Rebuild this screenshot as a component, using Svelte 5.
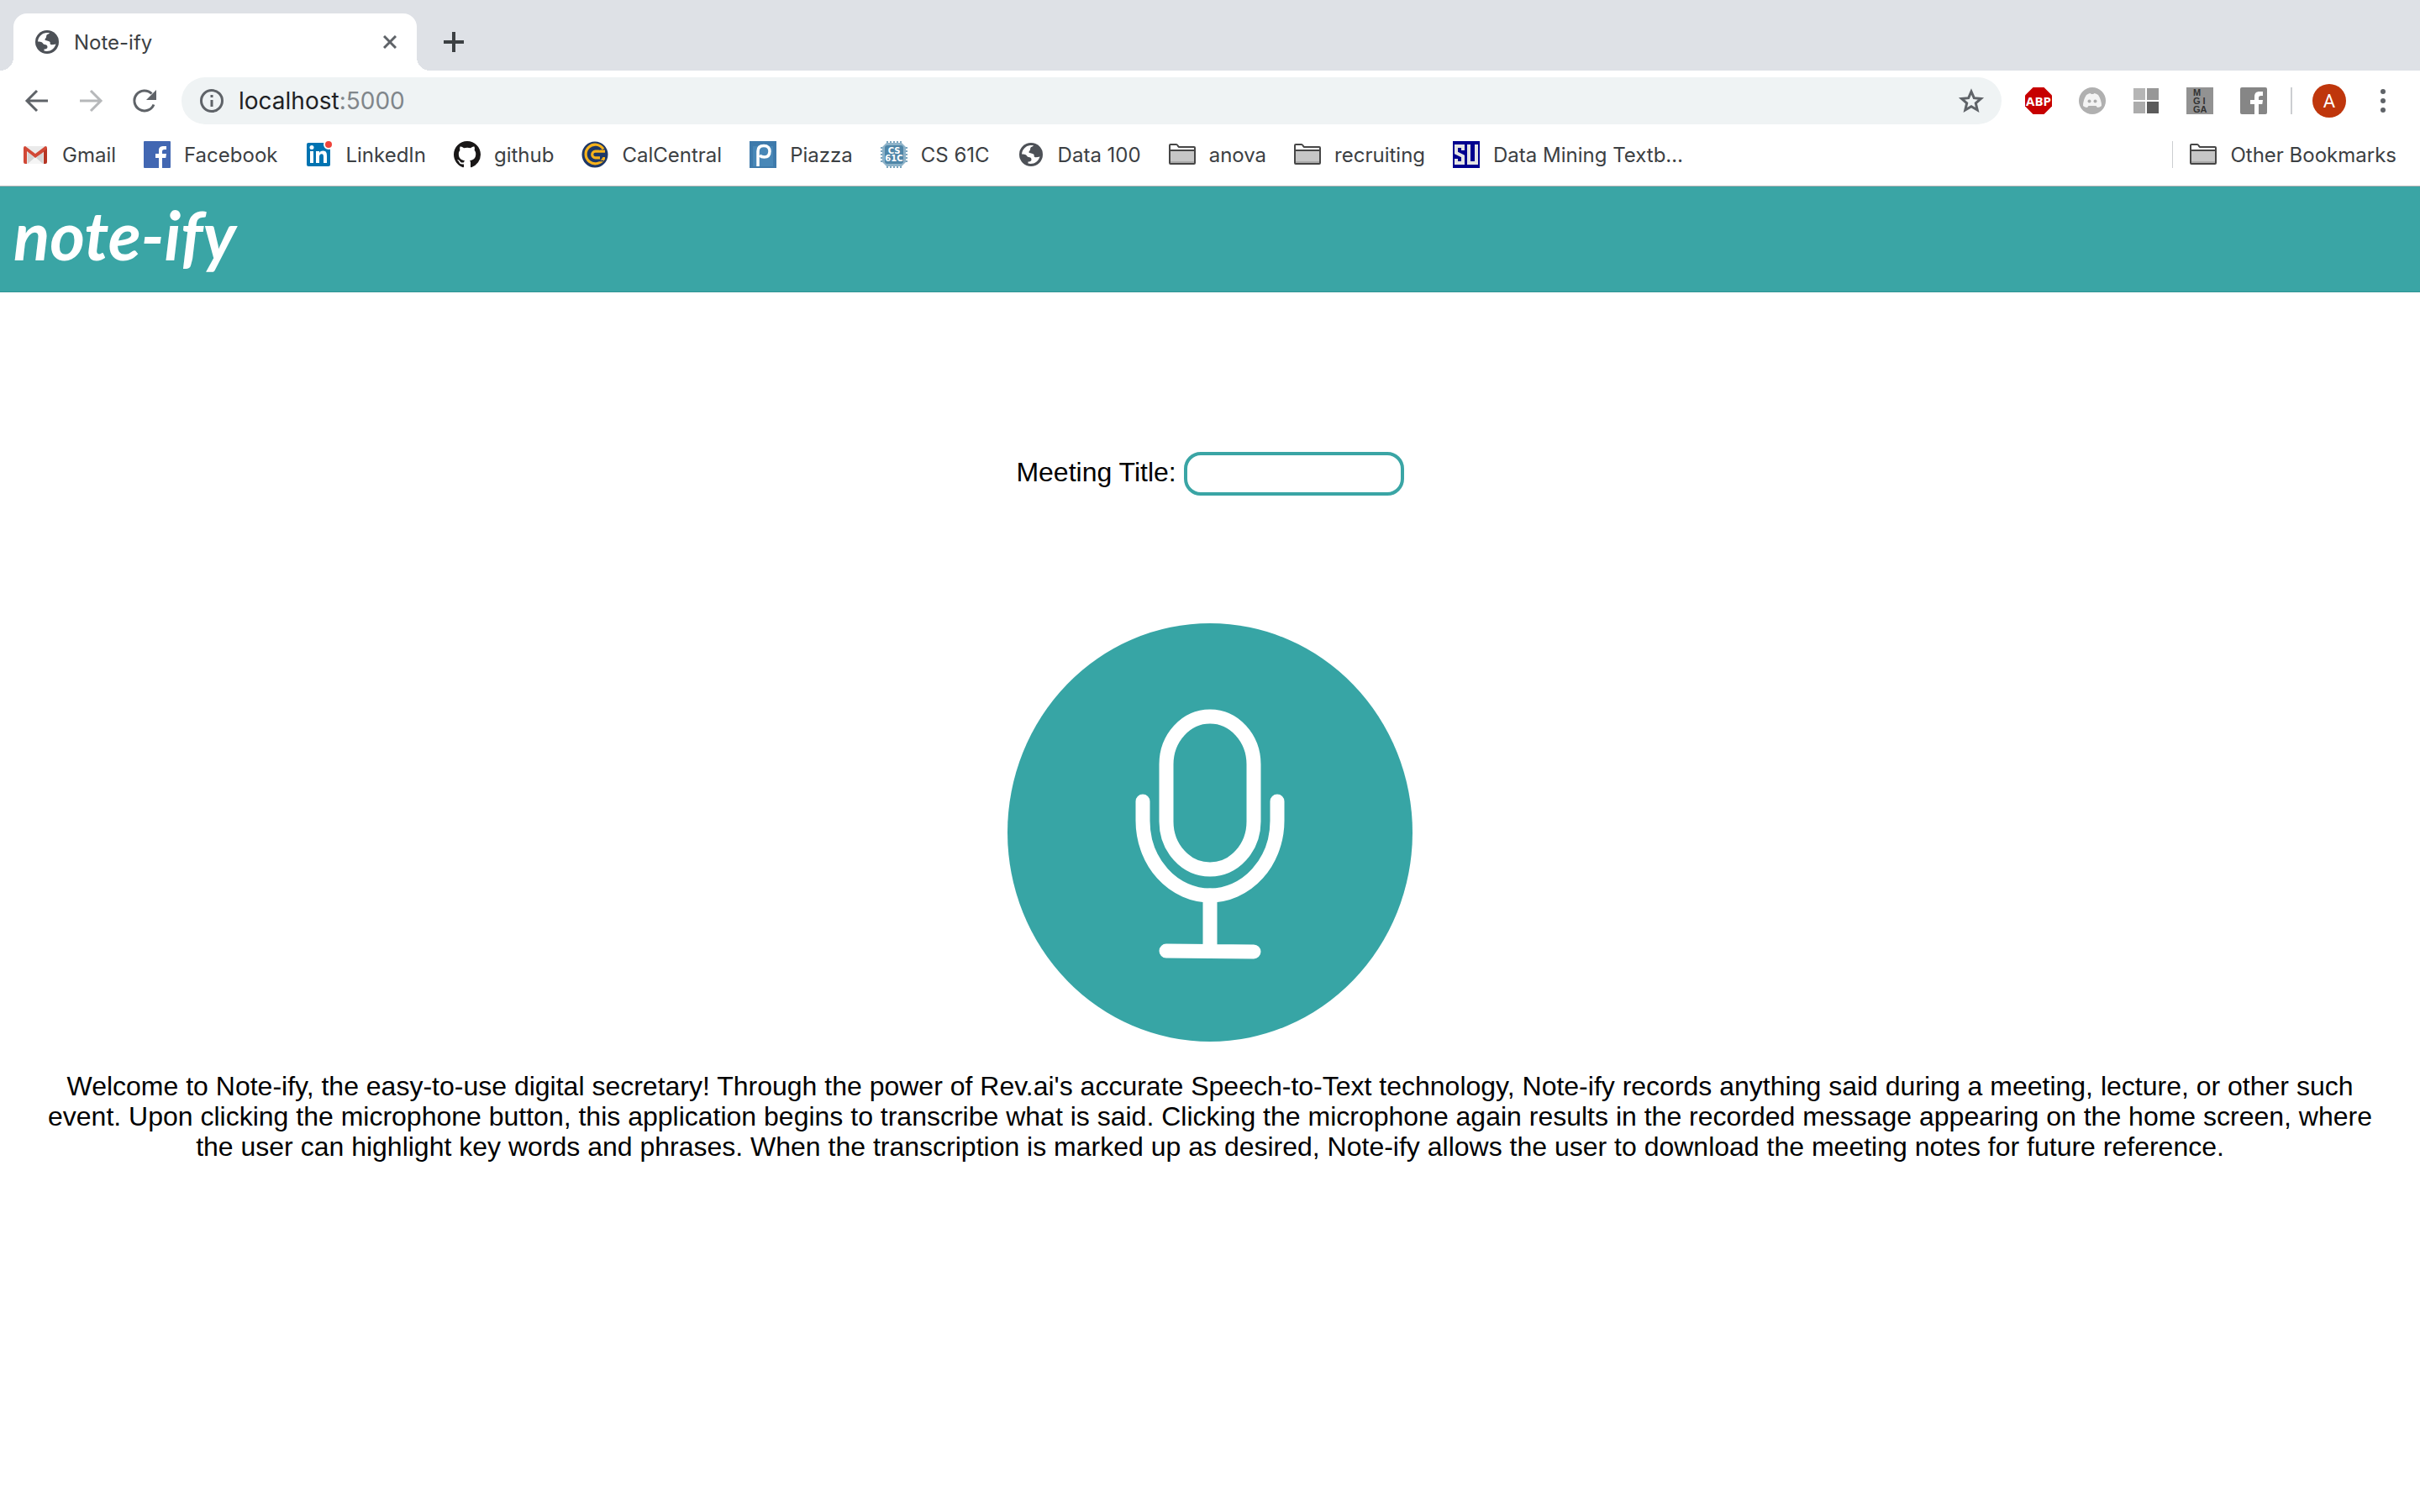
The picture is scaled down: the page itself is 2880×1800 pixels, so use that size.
<script lang="ts">
    type Bookmark = { label: string; icon: string };

    const bookmarks: Bookmark[] = [
        { label: 'Gmail', icon: 'gmail' },
        { label: 'Facebook', icon: 'facebook' },
        { label: 'LinkedIn', icon: 'linkedin' },
        { label: 'github', icon: 'github' },
        { label: 'CalCentral', icon: 'calcentral' },
        { label: 'Piazza', icon: 'piazza' },
        { label: 'CS 61C', icon: 'cs61c' },
        { label: 'Data 100', icon: 'globe' },
        { label: 'anova', icon: 'folder' },
        { label: 'recruiting', icon: 'folder' },
        { label: 'Data Mining Textb…', icon: 'su' }
    ];

    const extensions = ['abp', 'discord', 'squares', 'mgiga', 'facebook-gray'];

    let url = $state('localhost:5000');
    let meetingTitle = $state('');
    let recording = $state(false);

    // the port is drawn in a lighter gray than the host
    const host = $derived(url.split(':')[0]);
    const port = $derived(url.slice(host.length));

    function toggleRecording() {
        recording = !recording;
    }
</script>

<svelte:head>
    <title>Note-ify</title>
</svelte:head>

{#snippet icon(name: string)}
    <svg class="icon" viewBox="0 0 32 32" aria-hidden="true">
        {#if name === 'globe'}
            <circle cx="16" cy="16" r="14" fill="#4d5157" />
            <path fill="#fff" d="M5 15.500C5.500 10 9.500 5.600 15 5C17 4.800 18.500 5 19 5.300C18.500 6.500 16.500 6.500 15.500 7.800C14.800 9 15.500 10.300 14.500 11.300C13.500 12.300 13 13.500 14 14C15.500 14.500 18.500 14.500 19.500 16C20 17 19 18.500 20.500 19C22 19.500 24.500 18.800 26.500 18.500C25 23.500 20.500 27 15.500 27C14.500 27 13.500 26.800 12.500 26.500V24.500C14.500 24.500 16.500 24 16.500 22C16.500 20 15 19 13 19C11 18.500 11.500 17.500 10 16.500C9 15.800 7 15.500 5 15.500Z" />
        {:else if name === 'gmail'}
            <path fill="#eaeaea" d="M3 6h26v21H3z" />
            <path fill="#d4d4d4" d="M7 13l9 8 9-8v14l-9-6-9 6z" />
            <path fill="#f5f5f5" d="M7 27l9-8 9 8z" />
            <path fill="#d14836" d="M2 8q0-2 2-2l12 9 12-9q2 0 2 2v2l-14 10L6 12v15H4q-2 0-2-2z" />
            <path fill="#b63524" d="M26 12l4-3v16q0 2-2 2h-2z" />
        {:else if name === 'facebook'}
            <rect width="32" height="32" rx="1" fill="#4267b2" />
            <path fill="#fff" d="M18 32V20h-4v-5h4v-4c0-4 2.500-5 6-5h3v4h-2c-2.500 0-3 1-3 2.500V15h5l-.7 5H22v12z" />
        {:else if name === 'linkedin'}
            <rect x="2" y="2" width="28" height="28" rx="2" fill="#0073b1" />
            <path fill="#fff" d="M6 12h4v14H6zM13 12h4v2c1-1.600 2.500-2.400 4.500-2.400 4 0 4.500 3 4.500 6V26h-4v-7c0-2-.3-3.700-2.200-3.700S17 17 17 19v7h-4z" />
            <circle cx="8" cy="7.500" r="2.500" fill="#fff" />
            <circle cx="28" cy="4" r="6" fill="#fff" />
            <circle cx="28" cy="4" r="4" fill="#f0433a" />
        {:else if name === 'github'}
            <path transform="scale(2)" fill="#191717" d="M8 0C3.580 0 0 3.580 0 8c0 3.540 2.290 6.530 5.470 7.590.4.070.55-.17.55-.38 0-.19-.01-.82-.01-1.490-2.010.37-2.530-.49-2.690-.94-.09-.23-.48-.94-.82-1.130-.28-.15-.68-.52-.01-.53.63-.01 1.080.58 1.230.82.72 1.210 1.870.87 2.330.66.070-.52.28-.87.51-1.070-1.780-.2-3.640-.89-3.640-3.950 0-.87.31-1.590.82-2.150-.08-.2-.36-1.020.08-2.120 0 0 .67-.21 2.200.82.64-.18 1.320-.27 2-.27s1.360.09 2 .27c1.530-1.040 2.200-.82 2.200-.82.44 1.100.16 1.920.08 2.120.51.56.82 1.270.82 2.150 0 3.070-1.870 3.750-3.650 3.950.29.25.54.73.54 1.480 0 1.070-.01 1.930-.01 2.200 0 .21.15.46.55.38A8.010 8.010 0 0 0 16 8c0-4.420-3.580-8-8-8z" />
        {:else if name === 'calcentral'}
            <circle cx="16" cy="16" r="15.500" fill="#1d3767" />
            <g fill="none" stroke="#f6b21b" stroke-width="3.200">
                <path d="M28 12.200H16.500a3.800 3.800 0 0 0 0 7.600H22" />
                <path d="M26 9.500A11.300 11.300 0 1 0 26.500 20.500H28" />
                <path d="M22 10.200A7.600 7.600 0 1 0 17 23.600H26" stroke="#1d3767" stroke-width="1.500" />
            </g>
        {:else if name === 'piazza'}
            <rect width="32" height="32" fill="#3e7aab" />
            <rect x="4" y="6" width="24" height="24" fill="#5090c0" opacity="0.6" />
            <path fill="none" stroke="#fff" stroke-width="3.500" d="M10 30V12c0-4 2-6.500 7-6.500s7 3 7 6.500-1 7-6.500 7c-3 0-4.500-1-5.500-2" />
        {:else if name === 'cs61c'}
            <path stroke="#7ba6bf" stroke-width="32" stroke-dasharray="2 2" fill="none" d="M7 16h18" />
            <path stroke="#7ba6bf" stroke-width="32" stroke-dasharray="2 2" fill="none" d="M16 7v18" />
            <path fill="#8db2c8" d="M7 2h18l5 5v18l-5 5H7l-5-5V7z" />
            <rect x="5" y="5" width="22" height="22" rx="3" fill="#4f86a8" />
            <text class="chip" x="16" y="15" text-anchor="middle">CS</text>
            <text class="chip" x="16" y="24" text-anchor="middle">61C</text>
        {:else if name === 'folder'}
            <path fill="#fff" d="M1 27V5q0-1 1-1h8l3 3h17q1 0 1 1v19z" />
            <path fill="#c6c6c6" d="M1 11h30v16H1z" />
            <path fill="#ababab" d="M1 24h30v3H1z" />
            <path fill="none" stroke="#464646" stroke-width="2" stroke-linejoin="round" d="M1 26V5q0-1 1-1h7q1 0 2 2l1 1h18q1 0 1 1v18q0 1-1 1H2q-1 0-1-1zM1 11h30" />
        {:else if name === 'su'}
            <rect width="32" height="32" fill="#00008f" />
            <path fill="none" stroke="#e4e4e4" stroke-width="4" d="M12 11V6H4v8l8 4v8H4v-5M19 4v22h9V4" />
        {:else if name === 'abp'}
            <path fill="#c70000" d="M9.500 0h13L32 9.500v13L22.500 32h-13L0 22.500v-13z" />
            <text class="abp" x="16" y="22" text-anchor="middle">ABP</text>
        {:else if name === 'discord'}
            <circle cx="16" cy="16" r="16" fill="#b0b0b0" />
            <path fill="#f4f4f4" d="M9 9q3-2 5-2l.5 1h3l.5-1q2 0 5 2 4 6 4 13-2 2-5 2l-1.500-2h-9L10 24q-3 0-5-2 0-7 4-13z" />
            <circle cx="12.500" cy="16.500" r="2" fill="#acacac" />
            <circle cx="19.500" cy="16.500" r="2" fill="#acacac" />
        {:else if name === 'squares'}
            <path fill="#b5b5b5" d="M1 1h14v14H1z" />
            <path fill="#979797" d="M17 1h14v14H17z" />
            <path fill="#acacac" d="M1 17h14v14H1z" />
            <path fill="#5b5b5b" d="M17 17h14v14H17z" />
        {:else if name === 'mgiga'}
            <rect width="32" height="32" fill="#929292" />
            <text class="mgiga" x="8" y="10">M</text>
            <text class="mgiga" x="8" y="20">G I</text>
            <text class="mgiga" x="8" y="30">GA</text>
        {:else if name === 'facebook-gray'}
            <rect width="32" height="32" rx="2" fill="#868686" />
            <path fill="#fff" d="M17 32V20h-5v-5h5v-4c0-4 2-6 6-6h4v5h-2c-2.500 0-3 1-3 2.500V15h5l-.7 5H22v12z" />
        {/if}
    </svg>
{/snippet}

<div class="browser">
    <div class="tab-strip">
        <div class="tab">
            {@render icon('globe')}
            <span class="tab-title">Note-ify</span>
            <button class="plain" aria-label="Close tab">
                <svg class="close" viewBox="0 0 16 16"><path d="M1 1l14 14M15 1L1 15" /></svg>
            </button>
        </div>
        <button class="plain new-tab" aria-label="New tab">
            <svg class="plus" viewBox="0 0 24 24"><path d="M12 0v24M0 12h24" /></svg>
        </button>
    </div>

    <div class="toolbar">
        <div class="nav">
            <button class="plain" aria-label="Back">
                <svg class="icon stroke" viewBox="0 0 32 32"><path d="M29 16H4M16 4L4 16l12 12" /></svg>
            </button>
            <button class="plain" aria-label="Forward" disabled>
                <svg class="icon stroke faded" viewBox="0 0 32 32"><path d="M3 16h25M16 4l12 12-12 12" /></svg>
            </button>
            <button class="plain" aria-label="Reload">
                <svg class="icon stroke" viewBox="0 0 32 32">
                    <path d="M27 20.500A12 12 0 1 1 24.500 7.500" />
                    <path class="solid" d="M30 3v12H18z" />
                </svg>
            </button>
        </div>
        <div class="omnibox">
            <svg class="icon stroke" viewBox="0 0 32 32" aria-hidden="true">
                <circle cx="16" cy="16" r="12.500" />
                <path d="M16 15v8M16 9v3" />
            </svg>
            <a class="url" href="http://localhost:5000">{host}<span>{port}</span></a>
            <button class="plain" aria-label="Bookmark this page">
                <svg class="icon stroke" viewBox="0 0 32 32">
                    <path d="M16 5l3.300 7.700 8.200.7-6.200 5.500 1.900 8.100-7.200-4.300L8.800 27l1.900-8.100-6.200-5.500 8.200-.7z" />
                </svg>
            </button>
        </div>
        <div class="extensions">
            {#each extensions as name}
                <button class="plain" aria-label={name}>{@render icon(name)}</button>
            {/each}
        </div>
        <span class="divider"></span>
        <button class="avatar" aria-label="Profile">A</button>
        <button class="plain" aria-label="Menu">
            <svg class="dots" viewBox="0 0 8 32">
                <circle cx="4" cy="5" r="3" />
                <circle cx="4" cy="16" r="3" />
                <circle cx="4" cy="27" r="3" />
            </svg>
        </button>
    </div>

    <nav class="bookmarks">
        {#each bookmarks as bookmark}
            <a href="#{bookmark.icon}">{@render icon(bookmark.icon)}{bookmark.label}</a>
        {/each}
        <div class="other">
            <a href="#other">{@render icon('folder')}Other Bookmarks</a>
        </div>
    </nav>
</div>

<header>
    <span class="logo">note-ify</span>
</header>

<main>
    <form onsubmit={(e) => e.preventDefault()}>
        <label for="meeting-title">Meeting Title:</label>
        <input id="meeting-title" type="text" bind:value={meetingTitle} />
    </form>

    <button class="mic" aria-label="Record" aria-pressed={recording} onclick={toggleRecording}>
        <svg viewBox="0 0 482 498">
            <ellipse cx="241" cy="249" rx="241" ry="249" />
            <path d="M189 168a52 57 0 0 1 104 0v68a52 57 0 0 1-104 0z" />
            <path d="M161 212v23a80 89 0 0 0 160 0v-23" />
            <path d="M241 324v66M189 390l104 1" />
        </svg>
    </button>

    <p>
        Welcome to Note-ify, the easy-to-use digital secretary! Through the power of Rev.ai's accurate
        Speech-to-Text technology, Note-ify records anything said during a meeting, lecture, or other such
        event. Upon clicking the microphone button, this application begins to transcribe what is said.
        Clicking the microphone again results in the recorded message appearing on the home screen, where
        the user can highlight key words and phrases. When the transcription is marked up as desired,
        Note-ify allows the user to download the meeting notes for future reference.
    </p>
</main>

<style>
    :global(body) {
        margin: 0;
        background: #fff;
        font-family: 'Liberation Sans', Arial, sans-serif;
    }

    .browser {
        font-family: Inter, Roboto, sans-serif;
        font-size: 24px;
        color: #3c4043;
        border-bottom: 1px solid #b6b4b6;
    }

    .icon {
        display: block;
        flex: none;
        width: 32px;
        height: 32px;
    }

    .stroke {
        fill: none;
        stroke: #5f6368;
        stroke-width: 3;
    }

    .stroke .solid {
        fill: #5f6368;
        stroke: none;
    }

    .faded {
        opacity: 0.45;
    }

    .plain {
        padding: 0;
        border: none;
        background: none;
    }

    /* tabs */
    .tab-strip {
        display: flex;
        align-items: flex-end;
        height: 84px;
        padding-left: 16px;
        background: #dee1e6;
    }

    .tab {
        position: relative;
        display: flex;
        align-items: center;
        gap: 16px;
        box-sizing: border-box;
        width: 480px;
        height: 68px;
        padding: 0 24px;
        border-radius: 16px 16px 0 0;
        background: #fff;
    }

    .tab::before,
    .tab::after {
        content: '';
        position: absolute;
        bottom: 0;
        width: 16px;
        height: 16px;
    }

    .tab::before {
        right: 100%;
        background: radial-gradient(circle at 0 0, transparent 16px, #fff 16px);
    }

    .tab::after {
        left: 100%;
        background: radial-gradient(circle at 100% 0, transparent 16px, #fff 16px);
    }

    .tab-title {
        flex: 1;
    }

    .close {
        display: block;
        width: 16px;
        height: 16px;
        stroke: #5f6368;
        stroke-width: 3;
    }

    .new-tab {
        margin: 0 0 22px 32px;
    }

    .plus {
        display: block;
        width: 24px;
        height: 24px;
        stroke: #3c4043;
        stroke-width: 4;
    }

    /* toolbar */
    .toolbar {
        display: flex;
        align-items: center;
        height: 72px;
        padding: 0 40px 0 28px;
    }

    .nav,
    .extensions {
        display: flex;
        gap: 32px;
    }

    .omnibox {
        display: flex;
        flex: 1;
        align-items: center;
        gap: 16px;
        height: 56px;
        margin: 0 28px;
        padding: 0 20px;
        border-radius: 28px;
        background: #eff3f4;
    }

    .url {
        flex: 1;
        font-size: 28px;
        color: #202124;
        text-decoration: none;
    }

    .url span {
        color: #80868b;
    }

    .divider {
        width: 2px;
        height: 32px;
        margin: 0 24px 0 28px;
        background: #ccced1;
    }

    .avatar {
        width: 40px;
        height: 40px;
        margin-right: 40px;
        padding: 0;
        border: none;
        border-radius: 50%;
        background: #bf360c;
        color: #fff;
        font: 22px Roboto, sans-serif;
    }

    .dots {
        display: block;
        width: 8px;
        height: 32px;
        fill: #5f6368;
    }

    /* bookmarks */
    .bookmarks {
        display: flex;
        align-items: center;
        gap: 33px;
        height: 56px;
        padding: 0 28px 9px 26px;
    }

    .bookmarks a {
        display: flex;
        align-items: center;
        gap: 16px;
        color: inherit;
        text-decoration: none;
        white-space: nowrap;
    }

    .other {
        margin-left: auto;
        padding-left: 20px;
        border-left: 1px solid #ccced1;
    }

    .chip {
        font: bold 10px 'DejaVu Sans', sans-serif;
        fill: #fff;
    }

    .abp {
        font: bold 15px 'Open Sans', sans-serif;
        fill: #fff;
    }

    .mgiga {
        font: bold 11px 'Liberation Sans', sans-serif;
        fill: #333;
    }

    /* page */
    header {
        display: flex;
        align-items: center;
        box-sizing: border-box;
        height: 126px;
        padding: 0 16px 12px;
        border-bottom: 1px solid #2f9494;
        background: #3aa5a5;
    }

    .logo {
        font: italic bold 80px/100px Lato, sans-serif;
        color: #fff;
    }

    main {
        display: flex;
        flex-direction: column;
        align-items: center;
        padding: 190px 32px 0;
        font-size: 32px;
        line-height: 36px;
        text-align: center;
        color: #000;
    }

    input {
        box-sizing: border-box;
        width: 262px;
        height: 52px;
        padding: 4px 16px;
        border: 4px solid #3aa5a5;
        border-radius: 20px;
        outline: none;
        font: 26px 'Liberation Sans', Arial, sans-serif;
    }

    .mic {
        width: 482px;
        margin: 152px 0 0;
        padding: 0;
        border: none;
        background: none;
        cursor: pointer;
    }

    .mic svg {
        display: block;
        width: 100%;
    }

    .mic ellipse {
        fill: #37a5a5;
    }

    .mic path {
        fill: none;
        stroke: #fff;
        stroke-width: 17;
        stroke-linecap: round;
    }

    p {
        margin: 35px 0 0;
    }
</style>
